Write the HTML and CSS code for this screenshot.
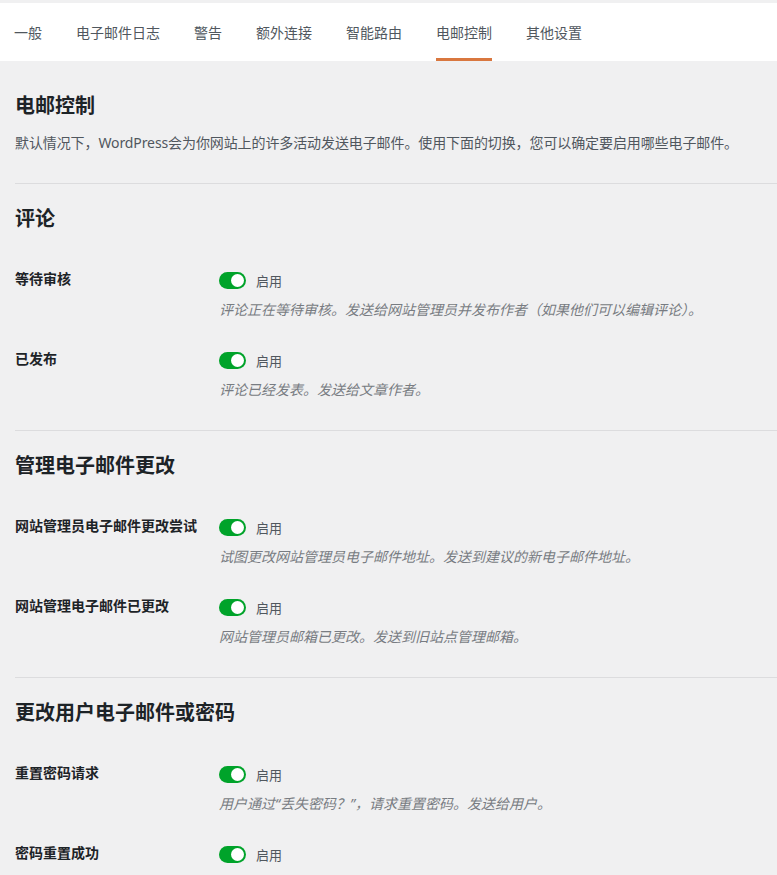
FILE: index.html
```html
<!DOCTYPE html>
<html lang="zh-CN">
<head>
    <meta charset="UTF-8">
    <meta name="viewport" content="width=device-width, initial-scale=1.0">
    <title>电邮控制</title>
    <link rel="stylesheet" href="styles.css">
</head>
<body>

    <!-- Settings tabs -->
    <nav class="tabs">
        <a class="tab" href="#">一般</a>
        <a class="tab" href="#">电子邮件日志</a>
        <a class="tab" href="#">警告</a>
        <a class="tab" href="#">额外连接</a>
        <a class="tab" href="#">智能路由</a>
        <a class="tab active" href="#">电邮控制</a>
        <a class="tab" href="#">其他设置</a>
    </nav>

    <main class="content">
        <section class="block">
            <h2>电邮控制</h2>
            <p class="intro">默认情况下，WordPress会为你网站上的许多活动发送电子邮件。使用下面的切换，您可以确定要启用哪些电子邮件。</p>
        </section>

        <!-- Comments -->
        <section class="block">
            <h2>评论</h2>
            <div class="rows">
                <div class="row">
                    <div class="row-label">等待审核</div>
                    <div class="row-control">
                        <label class="switch-line"><span class="switch"></span><span class="switch-text">启用</span></label>
                        <p class="row-desc">评论正在等待审核。发送给网站管理员并发布作者（如果他们可以编辑评论）。</p>
                    </div>
                </div>
                <div class="row">
                    <div class="row-label">已发布</div>
                    <div class="row-control">
                        <label class="switch-line"><span class="switch"></span><span class="switch-text">启用</span></label>
                        <p class="row-desc">评论已经发表。发送给文章作者。</p>
                    </div>
                </div>
            </div>
        </section>

        <!-- Admin email change -->
        <section class="block">
            <h2>管理电子邮件更改</h2>
            <div class="rows">
                <div class="row">
                    <div class="row-label">网站管理员电子邮件更改尝试</div>
                    <div class="row-control">
                        <label class="switch-line"><span class="switch"></span><span class="switch-text">启用</span></label>
                        <p class="row-desc">试图更改网站管理员电子邮件地址。发送到建议的新电子邮件地址。</p>
                    </div>
                </div>
                <div class="row">
                    <div class="row-label">网站管理电子邮件已更改</div>
                    <div class="row-control">
                        <label class="switch-line"><span class="switch"></span><span class="switch-text">启用</span></label>
                        <p class="row-desc">网站管理员邮箱已更改。发送到旧站点管理邮箱。</p>
                    </div>
                </div>
            </div>
        </section>

        <!-- User email or password -->
        <section class="block">
            <h2>更改用户电子邮件或密码</h2>
            <div class="rows">
                <div class="row">
                    <div class="row-label">重置密码请求</div>
                    <div class="row-control">
                        <label class="switch-line"><span class="switch"></span><span class="switch-text">启用</span></label>
                        <p class="row-desc">用户通过“丢失密码？”，请求重置密码。发送给用户。</p>
                    </div>
                </div>
                <div class="row">
                    <div class="row-label">密码重置成功</div>
                    <div class="row-control">
                        <label class="switch-line"><span class="switch"></span><span class="switch-text">启用</span></label>
                    </div>
                </div>
            </div>
        </section>
    </main>

</body>
</html>
```

FILE: styles.css
```css
/* Reset margin and padding */
* {
    margin: 0;
    padding: 0;
    box-sizing: border-box;
}

body {
    background-color: #f0f0f1;
    font-family: "Noto Sans", "Noto Sans CJK SC", sans-serif;
    color: #50575e;
    padding-top: 3px;
}

/* Tab bar */
.tabs {
    background-color: #fff;
    height: 58px;
    display: flex;
    gap: 34px;
    padding-left: 14px;
}

.tab {
    display: flex;
    align-items: center;
    font-size: 14px;
    color: #50575e;
    text-decoration: none;
    border-top: 3px solid transparent;
    border-bottom: 3px solid transparent;
}

.tab.active {
    border-bottom-color: #d9773f;
}

/* Settings content */
.content {
    padding-left: 15px;
}

.block {
    border-bottom: 1px solid #dcdcde;
    padding: 21px 0 30px;
}

.block:first-child {
    padding: 31px 0 30px;
}

.block:last-child {
    border-bottom: none;
    padding-bottom: 0;
}

h2 {
    font-size: 20px;
    line-height: 28px;
    font-weight: 700;
    color: #1d2327;
}

.intro {
    margin-top: 13px;
    font-size: 14px;
    line-height: 20px;
    letter-spacing: -0.1px;
    color: #50575e;
}

.rows {
    margin-top: 36px;
    display: flex;
    flex-direction: column;
    gap: 29px;
}

.row {
    display: grid;
    grid-template-columns: 204px 1fr;
}

.row-label {
    font-size: 14px;
    line-height: 20px;
    font-weight: 700;
    color: #1d2327;
}

.switch-line {
    display: flex;
    align-items: center;
    gap: 10px;
    height: 22px;
}

/* Toggle switch, always on */
.switch {
    position: relative;
    width: 27px;
    height: 17px;
    border-radius: 9px;
    background-color: #00a32a;
}

.switch::after {
    content: "";
    position: absolute;
    top: 2px;
    right: 2px;
    width: 13px;
    height: 13px;
    border-radius: 50%;
    background-color: #fff;
}

.switch-text {
    font-size: 13px;
    color: #50575e;
}

.row-desc {
    margin-top: 9px;
    font-size: 14px;
    line-height: 20px;
    font-style: italic;
    color: #787c82;
}
```
